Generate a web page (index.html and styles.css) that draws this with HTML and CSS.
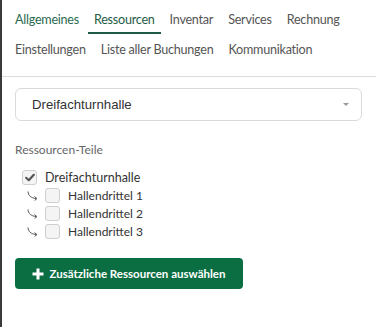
FILE: index.html
```
<!DOCTYPE html>
<html lang="de">
<head>
<meta charset="utf-8">
<link rel="stylesheet" href="styles.css">
</head>
<body>
<div class="page">
  <nav class="tabs">
    <a class="tab active-green">Allgemeines</a>
    <a class="tab active">Ressourcen</a>
    <a class="tab">Inventar</a>
    <a class="tab">Services</a>
    <a class="tab">Rechnung</a>
    <a class="tab">Einstellungen</a>
    <a class="tab">Liste aller Buchungen</a>
    <a class="tab">Kommunikation</a>
  </nav>
  <main class="content">
    <div class="select">
      <span class="select-text">Dreifachturnhalle</span>
      <span class="caret"></span>
    </div>
    <div class="label">Ressourcen-Teile</div>
    <ul class="tree">
      <li class="row">
        <span class="box checked"><svg width="10" height="9" viewBox="0 0 10 9"><path d="M1.2 4.8 L3.8 7.2 L8.8 1.8" fill="none" stroke="#555" stroke-width="2.2" stroke-linecap="round" stroke-linejoin="round"/></svg></span>
        <span class="text">Dreifachturnhalle</span>
      </li>
      <li class="row child">
        <svg class="arrow" width="12" height="11" viewBox="0 0 12 11"><path d="M1 0.5 C1.2 4.5 4 7 9 7.5" fill="none" stroke="#555" stroke-width="1"/><path d="M7.5 5.6 L10 7.6 L7.6 9.4" fill="none" stroke="#555" stroke-width="1"/></svg>
        <span class="box"></span>
        <span class="text">Hallendrittel 1</span>
      </li>
      <li class="row child">
        <svg class="arrow" width="12" height="11" viewBox="0 0 12 11"><path d="M1 0.5 C1.2 4.5 4 7 9 7.5" fill="none" stroke="#555" stroke-width="1"/><path d="M7.5 5.6 L10 7.6 L7.6 9.4" fill="none" stroke="#555" stroke-width="1"/></svg>
        <span class="box"></span>
        <span class="text">Hallendrittel 2</span>
      </li>
      <li class="row child">
        <svg class="arrow" width="12" height="11" viewBox="0 0 12 11"><path d="M1 0.5 C1.2 4.5 4 7 9 7.5" fill="none" stroke="#555" stroke-width="1"/><path d="M7.5 5.6 L10 7.6 L7.6 9.4" fill="none" stroke="#555" stroke-width="1"/></svg>
        <span class="box"></span>
        <span class="text">Hallendrittel 3</span>
      </li>
    </ul>
    <button class="btn"><svg class="plus" width="12" height="12" viewBox="0 0 12 12"><path d="M6 0.5 V11.5 M0.5 6 H11.5" stroke="#fff" stroke-width="3"/></svg><span>Zusätzliche Ressourcen auswählen</span></button>
  </main>
</div>
</body>
</html>
```
FILE: styles.css
```
html, body {
  margin: 0;
  padding: 0;
  background: #fff;
}
body {
  font-family: "Lato", "Noto Sans", sans-serif;
  color: #555;
}
.page {
  border-left: 2px solid #3a3a3a;
  min-height: 327px;
  box-sizing: border-box;
}
.tabs {
  display: flex;
  flex-wrap: wrap;
  padding: 4px 10px 12px 7px;
  border-bottom: 1px solid #dcdcdc;
}
.tab {
  display: block;
  padding: 7px 6px 3px;
  margin-right: 3px;
  line-height: 18px;
  font-size: 12.6px;
  letter-spacing: -0.25px;
  color: #555;
  border-bottom: 2px solid transparent;
}
.tab.active-green {
  color: #2b6b52;
}
.tab.active {
  color: #1f5c46;
  border-bottom-color: #1f5c46;
}
.content {
  padding: 11px 14px 0 13px;
}
.select {
  height: 33px;
  box-sizing: border-box;
  border: 1px solid #dadada;
  border-radius: 6px;
  display: flex;
  align-items: center;
  padding: 0 12px 0 16px;
}
.select-text {
  flex: 1;
  font-family: "Liberation Sans", Arial, sans-serif;
  font-size: 13.2px;
  color: #333;
}
.caret {
  width: 0;
  height: 0;
  border-left: 3px solid transparent;
  border-right: 3px solid transparent;
  border-top: 3px solid #999;
}
.label {
  margin-top: 22px;
  font-size: 12px;
  color: #666;
  line-height: 14px;
}
.tree {
  list-style: none;
  margin: 11px 0 0;
  padding: 0;
}
.row {
  display: flex;
  align-items: center;
  height: 18px;
  padding-left: 7px;
}
.row.child {
  padding-left: 12px;
}
.box {
  width: 15px;
  height: 15px;
  box-sizing: border-box;
  border: 1px solid #cfcfcf;
  border-radius: 3px;
  background: #f4f4f4;
  display: flex;
  align-items: center;
  justify-content: center;
}
.arrow {
  margin-right: 6px;
  margin-top: 2px;
}
.text {
  margin-left: 8px;
  font-size: 12.5px;
  color: #333;
}
.row.child .text {
  font-size: 12px;
}
.btn {
  margin-top: 18px;
  width: 228px;
  height: 31px;
  border: none;
  border-radius: 4px;
  background: #0b6e42;
  color: #fff;
  font-family: "Lato", "Noto Sans", sans-serif;
  font-weight: bold;
  font-size: 11.5px;
  display: flex;
  align-items: center;
  justify-content: center;
  gap: 5px;
  padding: 0;
}
.plus {
  display: block;
}
```
